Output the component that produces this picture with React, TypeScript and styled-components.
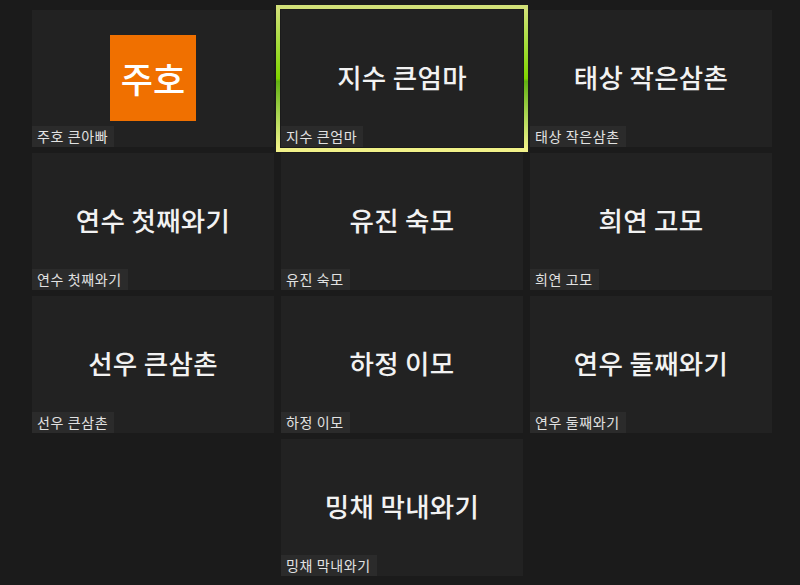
import React from 'react';
import styled, { createGlobalStyle } from 'styled-components';

const GlobalStyle = createGlobalStyle`
  html, body {
    margin: 0;
    background-color: #1b1b1b;
    font-family: 'Noto Sans CJK KR', 'Noto Sans', sans-serif;
  }
`;

const Gallery = styled.div`
  display: grid;
  grid-template-columns: repeat(3, 242px);
  grid-auto-rows: 137px;
  column-gap: 7px;
  row-gap: 6px;
  padding: 10px 0 0 32px;
  height: 585px;
  box-sizing: border-box;
`;

const Tile = styled.div<{ $active?: boolean; $column?: number }>`
  position: relative;
  display: flex;
  align-items: center;
  justify-content: center;
  background-color: #222222;
  grid-column: ${({ $column }) => ($column ? $column : 'auto')};

  ${({ $active }) =>
    $active &&
    `
    &::before {
      content: '';
      position: absolute;
      inset: -5px;
      border: 4px solid transparent;
      border-image: linear-gradient(
          180deg,
          #d2e078 0%,
          #a6dc3c 25%,
          #80d400 50%,
          #62b012 52%,
          #a8d450 75%,
          #f2f28a 100%
        )
        1;
      pointer-events: none;
    }
  `}
`;

const DisplayName = styled.div`
  color: #f2f2f2;
  font-size: 26.5px;
  font-weight: 500;
  letter-spacing: 0.3px;
  margin-top: -4px;
`;

const Avatar = styled.div`
  width: 86px;
  height: 86px;
  background-color: #f07000;
  color: #ffffff;
  display: flex;
  align-items: center;
  justify-content: center;
  font-size: 35px;
  font-weight: 500;
  margin-top: -2px;
`;

const NameTag = styled.div`
  position: absolute;
  left: 0;
  bottom: 0;
  height: 21px;
  line-height: 21px;
  padding: 0 6px 0 5px;
  background-color: #2b2b2b;
  color: #e2e2e2;
  font-size: 14px;
  letter-spacing: 0.6px;
`;

type Participant = {
  name: string;
  avatar?: string;
  active?: boolean;
  column?: number;
};

const participants: Participant[] = [
  { name: '주호 큰아빠', avatar: '주호' },
  { name: '지수 큰엄마', active: true },
  { name: '태상 작은삼촌' },
  { name: '연수 첫째와기' },
  { name: '유진 숙모' },
  { name: '희연 고모' },
  { name: '선우 큰삼촌' },
  { name: '하정 이모' },
  { name: '연우 둘째와기' },
  { name: '밍채 막내와기', column: 2 },
];

const App: React.FC = () => (
  <>
    <GlobalStyle />
    <Gallery>
      {participants.map((p) => (
        <Tile key={p.name} $active={p.active} $column={p.column}>
          {p.avatar ? <Avatar>{p.avatar}</Avatar> : <DisplayName>{p.name}</DisplayName>}
          <NameTag>{p.name}</NameTag>
        </Tile>
      ))}
    </Gallery>
  </>
);

export default App;
